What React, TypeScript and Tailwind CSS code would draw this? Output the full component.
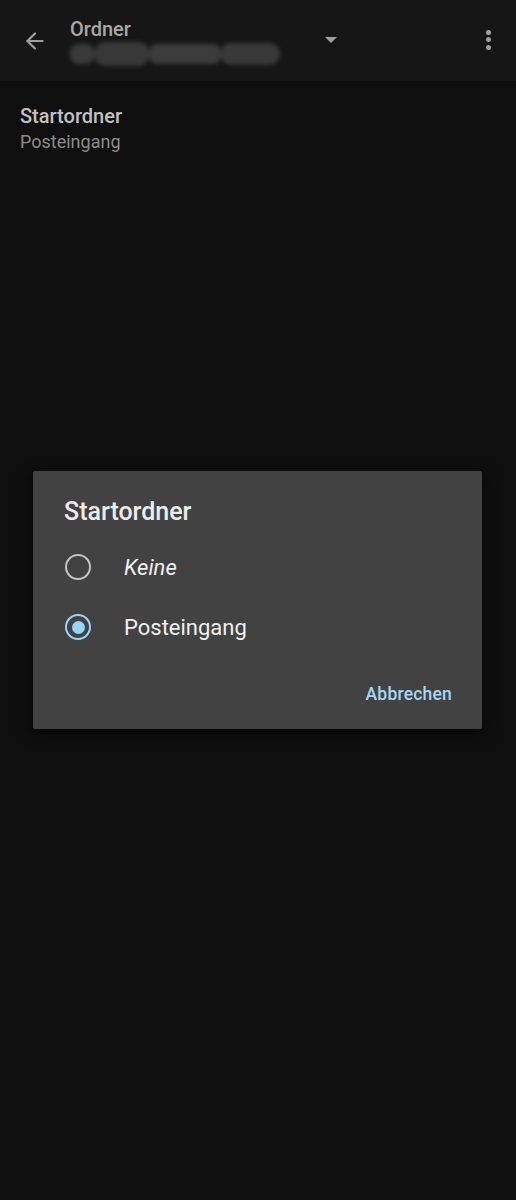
import { ArrowLeft } from 'lucide-react';

function Radio({ checked }: { checked: boolean }) {
  return checked ? (
    <div className="w-[26px] h-[26px] rounded-full border-[2.5px] border-[#9ad3fb] flex items-center justify-center">
      <div className="w-[13px] h-[13px] rounded-full bg-[#9ad3fb]" />
    </div>
  ) : (
    <div className="w-[26px] h-[26px] rounded-full border-[2.5px] border-[#c4c4c4]" />
  );
}

export default function App() {
  return (
    <div className="w-[516px] h-[1200px] bg-[#0f0f0f] font-['Roboto',sans-serif] relative overflow-hidden">
      <div className="h-[81px] bg-[#161616] flex items-center pl-[22px] pr-[25px]">
        <ArrowLeft size={26} strokeWidth={2} className="text-[#a0a0a0]" />
        <div className="ml-[22px] flex flex-col w-[214px] mt-[2px]">
          <span className="text-[20px] font-medium text-[#a9a9a9] leading-[22px]">Ordner</span>
          <div className="mt-[2px] flex items-center h-[24px] blur-[2px]">
            <div className="w-[24px] h-[20px] rounded-lg bg-[#3a3a3a]" />
            <div className="w-[56px] h-[24px] rounded-xl bg-[#383838]" />
            <div className="w-[70px] h-[20px] rounded-md bg-[#3c3c3c]" />
            <div className="w-[60px] h-[22px] rounded-xl bg-[#393939]" />
          </div>
        </div>
        <div className="ml-[41px] mt-[-2px] w-0 h-0 border-l-[6px] border-r-[6px] border-t-[6px] border-l-transparent border-r-transparent border-t-[#a0a0a0]" />
        <div className="ml-auto flex flex-col gap-[2.5px] mt-[-2px]">
          <div className="w-[5px] h-[5px] rounded-full bg-[#a0a0a0]" />
          <div className="w-[5px] h-[5px] rounded-full bg-[#a0a0a0]" />
          <div className="w-[5px] h-[5px] rounded-full bg-[#a0a0a0]" />
        </div>
      </div>

      <div className="px-[20px] pt-[21px]">
        <div className="text-[20px] font-medium text-[#c2c2c2] leading-[28px]">Startordner</div>
        <div className="text-[18px] text-[#8c8c8c] leading-[24px]">Posteingang</div>
      </div>

      <div className="absolute left-[33px] top-[471px] w-[449px] h-[258px] bg-[#424242] rounded-[2px] shadow-[0_4px_16px_rgba(0,0,0,0.6)]">
        <div className="pl-[31px] pt-[25px] text-[25px] font-medium text-[#ececec] leading-[32px]">Startordner</div>
        <div className="mt-[24px] flex items-center pl-[32px] h-[30px]">
          <Radio checked={false} />
          <span className="ml-[33px] text-[22px] italic text-[#f0f0f0]">Keine</span>
        </div>
        <div className="mt-[30px] flex items-center pl-[32px] h-[30px]">
          <Radio checked={true} />
          <span className="ml-[33px] text-[22px] text-[#f0f0f0]">Posteingang</span>
        </div>
        <div className="mt-[40px] flex justify-end pr-[30px]">
          <span className="text-[17.5px] font-medium text-[#a8d6f4] tracking-[0.2px] leading-[24px]">Abbrechen</span>
        </div>
      </div>
    </div>
  );
}
